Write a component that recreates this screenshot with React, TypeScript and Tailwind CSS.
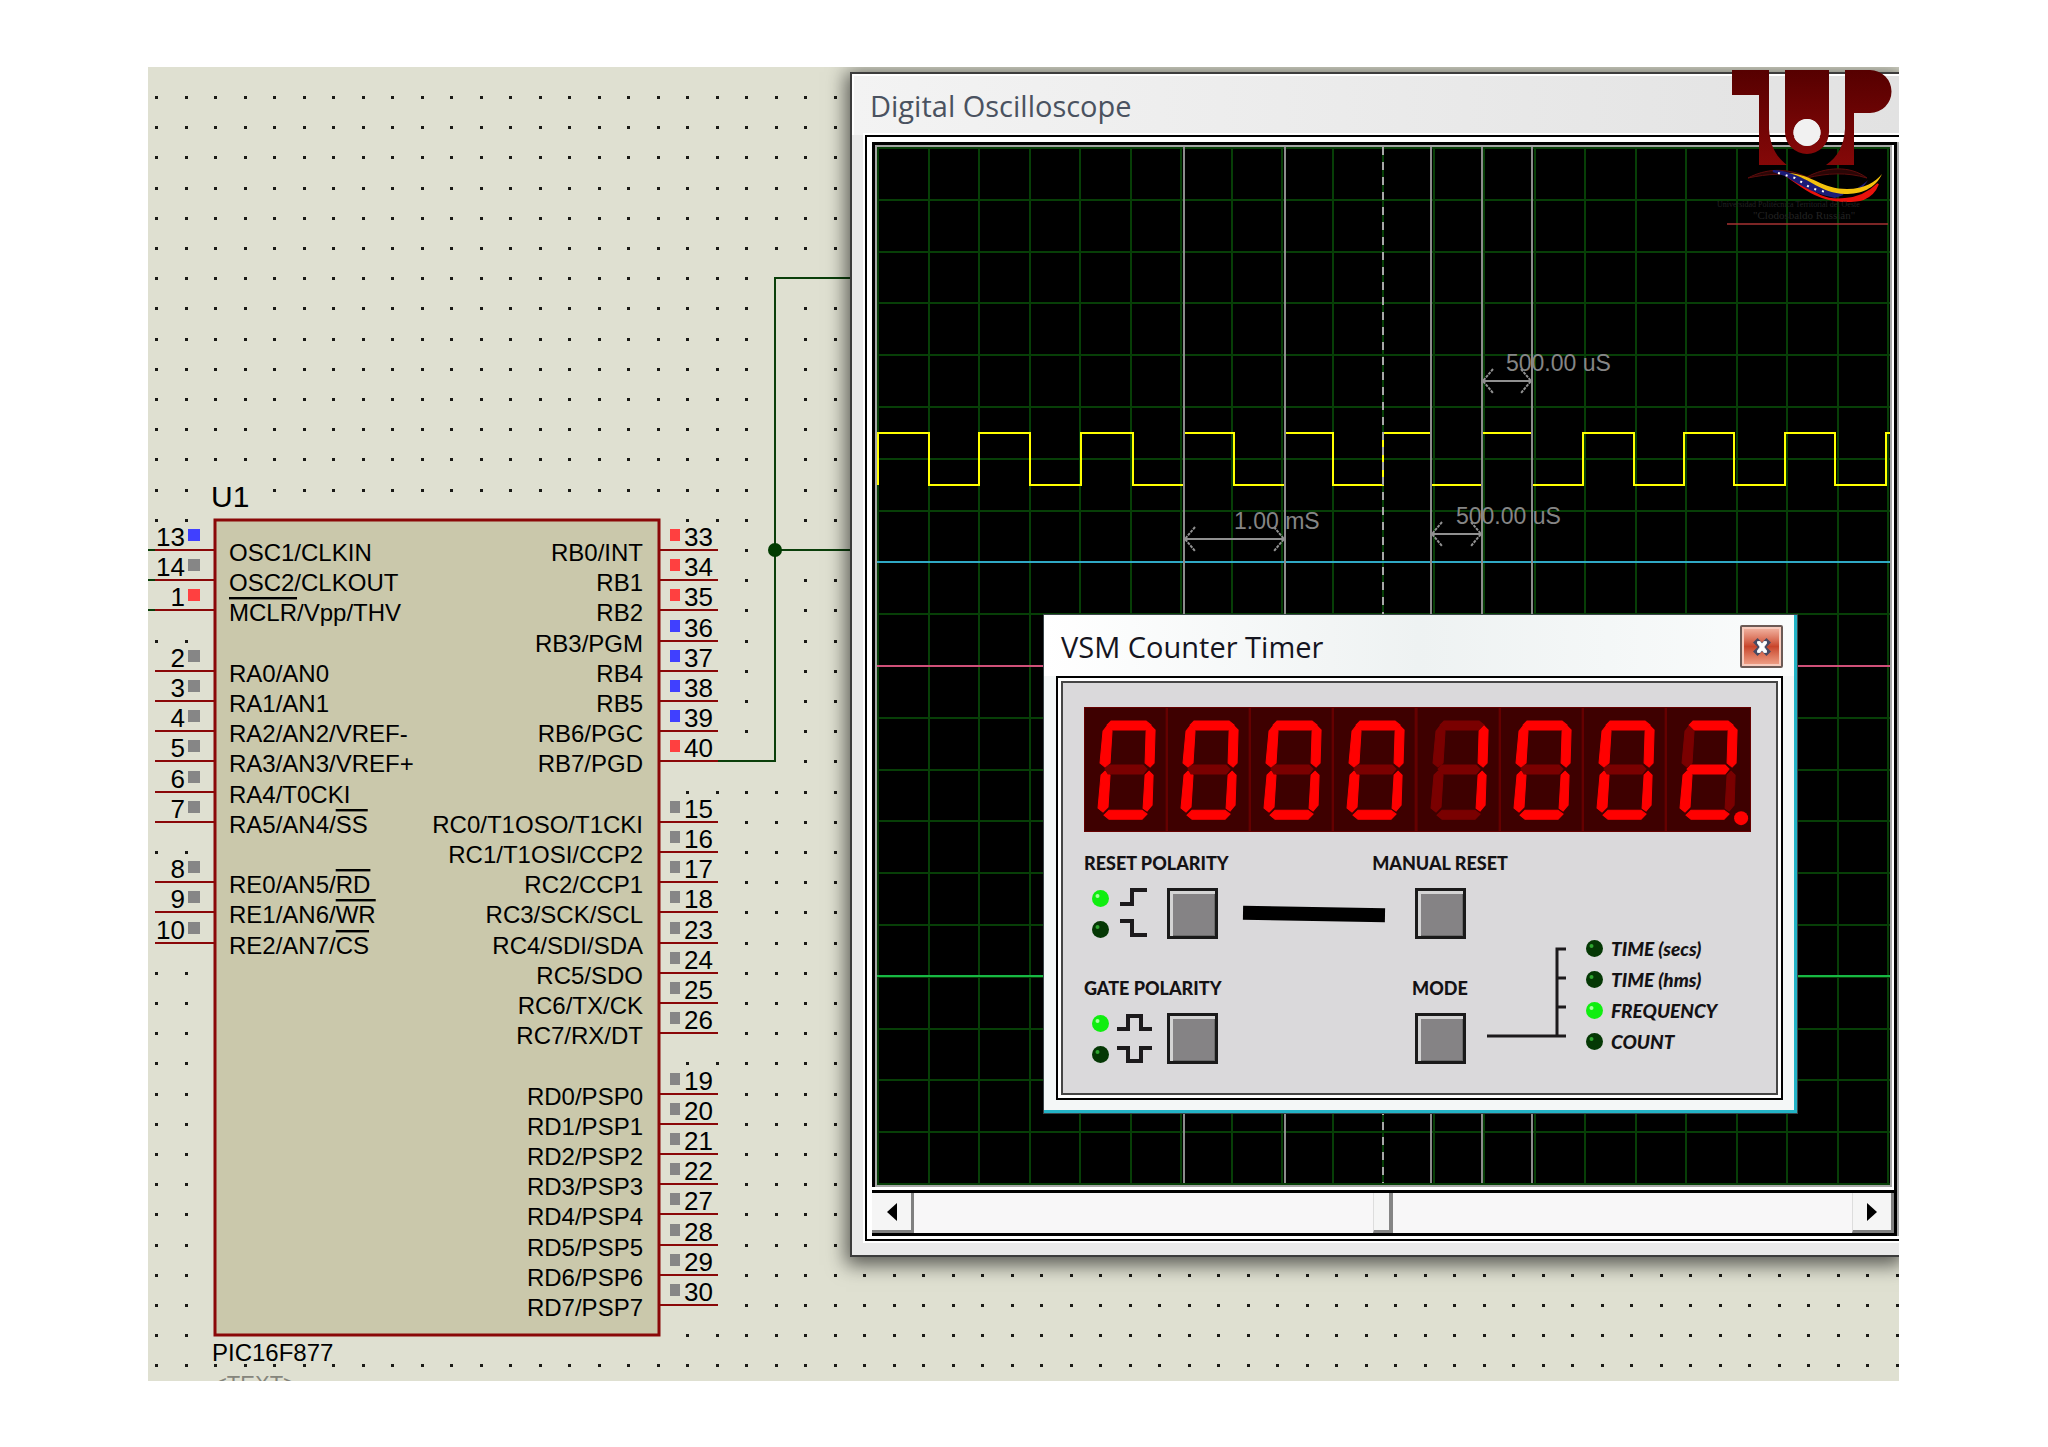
import { Fragment } from "react";

type Level = "high" | "low" | "off";

type Pin = {
  num: string;
  row: number;
  name: string;
  bar?: string;
  rest?: string;
  level?: Level;
};

const leftPins: Pin[] = [
  { num: "13", row: 15, name: "OSC1/CLKIN", level: "low" },
  { num: "14", row: 16, name: "OSC2/CLKOUT" },
  { num: "1", row: 17, name: "", bar: "MCLR", rest: "/Vpp/THV", level: "high" },
  { num: "2", row: 19, name: "RA0/AN0" },
  { num: "3", row: 20, name: "RA1/AN1" },
  { num: "4", row: 21, name: "RA2/AN2/VREF-" },
  { num: "5", row: 22, name: "RA3/AN3/VREF+" },
  { num: "6", row: 23, name: "RA4/T0CKI" },
  { num: "7", row: 24, name: "RA5/AN4/", bar: "SS" },
  { num: "8", row: 26, name: "RE0/AN5/", bar: "RD" },
  { num: "9", row: 27, name: "RE1/AN6/", bar: "WR" },
  { num: "10", row: 28, name: "RE2/AN7/", bar: "CS" },
];

const rightPins: Pin[] = [
  { num: "33", row: 15, name: "RB0/INT", level: "high" },
  { num: "34", row: 16, name: "RB1", level: "high" },
  { num: "35", row: 17, name: "RB2", level: "high" },
  { num: "36", row: 18, name: "RB3/PGM", level: "low" },
  { num: "37", row: 19, name: "RB4", level: "low" },
  { num: "38", row: 20, name: "RB5", level: "low" },
  { num: "39", row: 21, name: "RB6/PGC", level: "low" },
  { num: "40", row: 22, name: "RB7/PGD", level: "high" },
  { num: "15", row: 24, name: "RC0/T1OSO/T1CKI" },
  { num: "16", row: 25, name: "RC1/T1OSI/CCP2" },
  { num: "17", row: 26, name: "RC2/CCP1" },
  { num: "18", row: 27, name: "RC3/SCK/SCL" },
  { num: "23", row: 28, name: "RC4/SDI/SDA" },
  { num: "24", row: 29, name: "RC5/SDO" },
  { num: "25", row: 30, name: "RC6/TX/CK" },
  { num: "26", row: 31, name: "RC7/RX/DT" },
  { num: "19", row: 33, name: "RD0/PSP0" },
  { num: "20", row: 34, name: "RD1/PSP1" },
  { num: "21", row: 35, name: "RD2/PSP2" },
  { num: "22", row: 36, name: "RD3/PSP3" },
  { num: "27", row: 37, name: "RD4/PSP4" },
  { num: "28", row: 38, name: "RD5/PSP5" },
  { num: "29", row: 39, name: "RD6/PSP6" },
  { num: "30", row: 40, name: "RD7/PSP7" },
];

const levelColor: Record<Level, string> = {
  high: "#ff4040",
  low: "#4040ff",
  off: "#868686",
};

const rowY = (row: number) => Math.round(30 + row * 30.2);
const colX = (col: number) => Math.round(8 + col * 29.5);

const leftRows = leftPins.map((p) => p.row);
const rightRows = rightPins.map((p) => p.row);

// grid dots are hidden under the chip, its pins and the wire
function hasDot(col: number, row: number) {
  if (row === 13 && (col === 2 || col === 3)) return false;
  if (row >= 14 && row <= 41 && col >= 2 && col <= 17) return false;
  if (col < 2 && leftRows.includes(row)) return false;
  if ((col === 18 || col === 19) && rightRows.includes(row)) return false;
  if (col === 21 && row >= 6 && row <= 22) return false;
  if (row === 22 && col === 20) return false;
  if (col > 21 && (row === 6 || row === 15) && col < 24) return false;
  return true;
}

function Schematic() {
  const dots = [];
  for (let row = 0; row < 43; row++) {
    for (let col = 0; col < 60; col++) {
      if (hasDot(col, row)) {
        dots.push(`M${colX(col) - 1} ${rowY(row) - 1}h3v3h-3z`);
      }
    }
  }

  return (
    <svg
      width="1751"
      height="1314"
      className="block font-['Liberation_Sans',sans-serif] text-[24px]"
    >
      <path d={dots.join("")} fill="#1a1a16" />

      <g fill="none" stroke="#0a3f0a" strokeWidth="2">
        <path d={`M570 ${rowY(22)}H627V${rowY(6)}H704`} />
        <path d={`M627 ${rowY(15)}H704`} />
        <path d={`M0 ${rowY(15)}H8M0 ${rowY(16)}H8M0 ${rowY(17)}H8`} />
      </g>
      <circle cx="627" cy={rowY(15)} r="7" fill="#003c00" />

      <rect
        x="67"
        y={rowY(14)}
        width="444"
        height={rowY(41) - rowY(14)}
        fill="#cac8ab"
        stroke="#8a0808"
        strokeWidth="3"
      />

      <text x="63" y="440" fontSize="30">
        U1
      </text>
      <text x="64" y="1294">
        PIC16F877
      </text>
      <text x="66" y="1324" fontSize="22" fill="#85857c">
        {"<TEXT>"}
      </text>

      {leftPins.map((pin) => {
        const y = rowY(pin.row);
        return (
          <Fragment key={pin.num}>
            <path d={`M7 ${y}H67`} stroke="#8a0808" strokeWidth="2" />
            <rect
              x="40"
              y={y - 21}
              width="12"
              height="12"
              fill={levelColor[pin.level ?? "off"]}
            />
            <text x="37" y={y - 4} fontSize="26" textAnchor="end">
              {pin.num}
            </text>
            <text x="81" y={y + 11}>
              {pin.name}
              {pin.bar && (
                <tspan className="overline decoration-2">{pin.bar}</tspan>
              )}
              {pin.rest}
            </text>
          </Fragment>
        );
      })}

      {rightPins.map((pin) => {
        const y = rowY(pin.row);
        return (
          <Fragment key={pin.num}>
            <path d={`M511 ${y}H570`} stroke="#8a0808" strokeWidth="2" />
            <rect
              x="522"
              y={y - 21}
              width="10"
              height="12"
              fill={levelColor[pin.level ?? "off"]}
            />
            <text x="536" y={y - 4} fontSize="26">
              {pin.num}
            </text>
            <text x="495" y={y + 11} textAnchor="end">
              {pin.name}
            </text>
          </Fragment>
        );
      })}
    </svg>
  );
}

type MeasureProps = {
  from: number;
  to: number;
  y: number;
  textX: number;
  textY: number;
  label: string;
};

function Measure({ from, to, y, textX, textY, label }: MeasureProps) {
  return (
    <g>
      <path d={`M${from} ${y}H${to}`} stroke="#909090" strokeWidth="2" />
      <path
        d={`M${from + 11} ${y - 12}L${from + 1} ${y}L${from + 11} ${y + 12}M${
          to - 11
        } ${y - 12}L${to - 1} ${y}L${to - 11} ${y + 12}`}
        fill="none"
        stroke="#909090"
        strokeWidth="2"
        strokeDasharray="3 1"
      />
      <text x={textX} y={textY} fill="#858585">
        {label}
      </text>
    </g>
  );
}

const edges = [
  1, 52, 102, 153, 204, 256, 307, 357, 408, 456, 506, 554, 605, 655, 706, 757,
  807, 857, 908, 958, 1009,
];
const cursors = [307, 408, 554, 605, 655];

function ScopePlot() {
  let wave = "M1 338";
  edges.forEach((x, i) => {
    wave += `H${x}V${i % 2 === 0 ? 286 : 338}`;
  });
  wave += "H1013";

  let grid = "";
  for (let i = 0; i <= 20; i++) {
    grid += `M${Math.round(1 + i * 50.5)} 0V1038`;
    grid += `M0 ${Math.round(1 + i * 51.8)}H1013`;
  }

  return (
    <svg
      viewBox="0 0 1013 1038"
      className="block h-auto w-full bg-black font-['Liberation_Sans',sans-serif] text-[23px]"
    >
      <path d={grid} stroke="#073f07" strokeWidth="2" />
      <path d="M0 415H1013" stroke="#2fa8c4" strokeWidth="2" />
      <path d="M0 519H1013" stroke="#cf5078" strokeWidth="2" />
      <path d="M0 829H1013" stroke="#17b845" strokeWidth="2" />
      <path d={wave} fill="none" stroke="#ffff00" strokeWidth="2" />
      {cursors.map((x) => (
        <path key={x} d={`M${x} 0V1036`} stroke="#8c8c8c" strokeWidth="2" />
      ))}
      <path
        d="M506 0V1036"
        stroke="#a8a8a8"
        strokeWidth="2"
        strokeDasharray="8 7"
      />
      <Measure from={605} to={655} y={234} textX={629} textY={224} label="500.00 uS" />
      <Measure from={554} to={605} y={387} textX={579} textY={377} label="500.00 uS" />
      <Measure from={307} to={408} y={392} textX={357} textY={382} label="1.00 mS" />
    </svg>
  );
}

function Oscilloscope() {
  return (
    <section className="absolute top-[5px] right-0 left-[702px] flex flex-col border-y-2 border-l-2 border-[#3c3c3c] bg-[#eaeaea] shadow-[0_4px_18px_4px_rgba(0,0,0,0.6)]">
      <header className="flex h-[61px] items-center border-t-2 border-l-2 border-white bg-linear-to-r from-[#f3f3f3] to-[#e2e2e2] pl-4">
        <h2 className="font-['Open_Sans',sans-serif] text-[29px] leading-10 text-[#4a5260]">
          Digital Oscilloscope
        </h2>
      </header>

      <div className="mb-[14px] ml-[13px] border-y-2 border-l-2 border-black bg-white pt-[5px] pb-[3px] pl-[5px] outline-2 outline-white">
        <div className="border-r-2 border-[#a8a8a8]">
          <div className="border-r-[3px] border-black">
            <div className="border-t-[3px] border-l-[3px] border-black">
              <div className="mr-[2px] border-2 border-[#a6a6a6]">
                <ScopePlot />
              </div>
            </div>
            <div className="mt-[3px] flex h-[46px] border-y-[3px] border-black bg-[#f8f7f8]">
              <button
                aria-label="Scroll left"
                className="flex w-[42px] items-center justify-center border-r-3 border-b-3 border-[#808080] bg-[#f5f5f5]"
              >
                <svg width="10" height="18">
                  <path d="M10 0V18L0 9Z" />
                </svg>
              </button>
              <input
                type="range"
                aria-label="Time position"
                defaultValue={50}
                className="min-w-0 flex-1 appearance-none bg-transparent [&::-webkit-slider-thumb]:h-10 [&::-webkit-slider-thumb]:w-5 [&::-webkit-slider-thumb]:appearance-none [&::-webkit-slider-thumb]:border-r-4 [&::-webkit-slider-thumb]:border-b-3 [&::-webkit-slider-thumb]:border-l-1 [&::-webkit-slider-thumb]:border-[#858585] [&::-webkit-slider-thumb]:border-l-[#dddddd] [&::-webkit-slider-thumb]:bg-[#f5f5f5]"
              />
              <button
                aria-label="Scroll right"
                className="flex w-[42px] items-center justify-center border-r-3 border-b-3 border-l-1 border-[#808080] border-l-[#dddddd] bg-[#f5f5f5]"
              >
                <svg width="10" height="18">
                  <path d="M0 0V18L10 9Z" />
                </svg>
              </button>
            </div>
          </div>
        </div>
      </div>
    </section>
  );
}

const segmentShapes: Record<string, string> = {
  a: "22,17 26,13 61,13 66,17 62,22 26,22",
  b: "61,23 66,18 70,22 69,55 65,59 60,55",
  c: "60,67 64,63 68,67 67,97 62,103 58,100",
  d: "19,107 24,102 57,102 62,106 57,111 24,111",
  e: "16,67 20,63 25,67 23,99 18,104 13,100",
  f: "18,23 22,18 27,23 25,55 20,59 15,55",
  g: "20,61 24,57 58,57 62,61 58,66 23,66",
};

const litSegments: Record<string, string> = {
  "0": "abcdef",
  "1": "bc",
  "2": "abged",
};

function SevenSegment({ value, dot }: { value: string; dot?: boolean }) {
  return (
    <svg viewBox="0 0 83 123" className="block h-auto min-w-0 flex-1">
      {!dot && <path d="M82 0V123" stroke="#650000" strokeWidth="3" />}
      {Object.entries(segmentShapes).map(([name, points]) => (
        <polygon
          key={name}
          points={points}
          fill={litSegments[value].includes(name) ? "#ff0000" : "#7a0000"}
          stroke={litSegments[value].includes(name) ? "#ff0000" : "#7a0000"}
          strokeWidth="1"
        />
      ))}
      {dot && <circle cx="74" cy="110" r="7" fill="#ff0000" />}
    </svg>
  );
}

function Led({ on }: { on?: boolean }) {
  return (
    <svg width="17" height="17" viewBox="0 0 17 17" className="shrink-0">
      <circle cx="8.5" cy="8.5" r="8.5" fill={on ? "#10ee10" : "#053805"} />
      <circle cx="5.5" cy="6" r="2" fill={on ? "#a8ffa0" : "#2fa52f"} />
    </svg>
  );
}

function PushButton({ label }: { label: string }) {
  return (
    <button
      aria-label={label}
      className="size-[51px] shrink-0 border-3 border-[#1a1a1a] bg-[#858385] shadow-[inset_3px_3px_0_#d4d4d4,inset_-1px_-1px_0_#6a6a6a]"
    />
  );
}

type PolarityProps = {
  label: string;
  up: string;
  down: string;
};

function Polarity({ label, up, down }: PolarityProps) {
  return (
    <div>
      <p className="whitespace-nowrap">{label}</p>
      <div className="mt-[15px] flex items-center pl-2">
        <div className="flex flex-col gap-[14px]">
          <Led on />
          <Led />
        </div>
        <svg
          width="36"
          height="51"
          fill="none"
          stroke="#1c1a1c"
          strokeWidth="4"
          className="mr-[14px] ml-2"
        >
          <path d={up} />
          <path d={down} />
        </svg>
        <PushButton label={label} />
      </div>
    </div>
  );
}

const modes = ["TIME (secs)", "TIME (hms)", "FREQUENCY", "COUNT"];

function CounterTimer() {
  return (
    <section className="absolute top-[547px] left-[895px] w-[755px] border border-[#3a4448] bg-[#f4f7f7]">
      <div className="border-r-3 border-b-3 border-[#23b3c6] pb-[10px]">
        <header className="flex h-[61px] items-center justify-between bg-linear-to-r from-white via-[#eef2f2] to-[#fafcfc] pt-[2px] pr-[11px] pl-[17px]">
          <h2 className="font-['Open_Sans',sans-serif] text-[29px] leading-10 text-[#15151f]">
            VSM Counter Timer
          </h2>
          <button
            aria-label="Close"
            className="flex size-[43px] items-center justify-center rounded-xs border-2 border-[#6b5a55] bg-linear-to-b from-[#f3b9a8] from-0% via-[#c8452b] via-50% to-[#f0a58c] shadow-[inset_0_0_0_2px_#f7cbbd]"
          >
            <svg width="18" height="18" viewBox="0 0 20 18">
              <path
                d="M5 4L15 14M15 4L5 14"
                stroke="#474a63"
                strokeWidth="7"
                strokeLinecap="square"
              />
              <path
                d="M5 3H8L10 6L12 3H15V5L12 9L15 13V15H12L10 12L8 15H5V13L8 9L5 5Z"
                fill="#fff"
                stroke="#fff"
                strokeWidth="1"
              />
            </svg>
          </button>
        </header>

        <div className="mr-[11px] ml-3 border-2 border-black bg-white p-[3px]">
          <div className="border-2 border-[#454545] bg-[#dad9db] px-[21px] pt-6 pb-[29px]">
            <div
              role="img"
              aria-label="00001002."
              className="mr-[4px] flex border border-[#650000] bg-[#3e0000]"
            >
              {"00001002".split("").map((digit, i) => (
                <SevenSegment key={i} value={digit} dot={i === 7} />
              ))}
            </div>

            <div className="mt-[21px] flex items-start font-[Lato,sans-serif] text-[18px] leading-5 font-black text-[#141214]">
              <div className="flex w-[159px] flex-col gap-[39px]">
                <Polarity
                  label="RESET POLARITY"
                  up="M3 16H15V2H30"
                  down="M3 33H15V47H30"
                />
                <Polarity
                  label="GATE POLARITY"
                  up="M0 16H11V3H24V16H35"
                  down="M0 35H11V48H24V35H35"
                />
              </div>

              <div className="mt-[54px] -mr-[10px] h-[14px] w-[142px] rotate-1 bg-black" />

              <div className="flex w-[130px] flex-col gap-[39px]">
                {["MANUAL RESET", "MODE"].map((label) => (
                  <div key={label} className="flex flex-col items-center gap-[15px]">
                    <p className="whitespace-nowrap">{label}</p>
                    <PushButton label={label} />
                  </div>
                ))}
              </div>

              <div className="mt-20 -ml-[18px] flex gap-[19px]">
                <svg
                  width="80"
                  height="124"
                  fill="none"
                  stroke="#1c1a1c"
                  strokeWidth="3"
                >
                  <path d="M0 103H79M70 103V16H79M70 45H79M70 74H79" />
                </svg>
                <ul className="text-[19px] leading-[31px] italic">
                  {modes.map((mode) => (
                    <li key={mode} className="flex items-center gap-2">
                      <Led on={mode === "FREQUENCY"} />
                      <span className="whitespace-nowrap">{mode}</span>
                    </li>
                  ))}
                </ul>
              </div>
            </div>
          </div>
        </div>
      </div>
    </section>
  );
}

function Logo() {
  return (
    <svg
      width="184"
      height="164"
      className="absolute top-0 right-0 font-['Liberation_Serif',serif]"
    >
      <defs>
        <linearGradient id="maroon" x1="0" y1="0" x2="0" y2="1">
          <stop offset="0" stopColor="#560000" />
          <stop offset="1" stopColor="#850808" />
        </linearGradient>
      </defs>
      <g fill="url(#maroon)">
        <path d="M17 3H54L54 62C55 78 61 90 72 98H44V28H17Z" />
        <path
          fillRule="evenodd"
          d="M70 3H114V65A22 22 0 0 1 70 65ZM92 52A13.5 13.5 0 1 0 92 79A13.5 13.5 0 1 0 92 52Z"
        />
        <path d="M130 3H155A21.5 21.5 0 0 1 155 46H139V98H111C123 90 129 78 130 62Z" />
      </g>
      <circle cx="92" cy="65.5" r="13.5" fill="#f1f1f1" />
      <path
        d="M33 111C50 102 70 100 92 110C110 100 135 98 152 111C132 105 112 106 92 111C72 105 52 107 33 111Z"
        fill="#2a0606"
        stroke="#5c0c0c"
        strokeWidth="1"
      />
      <path
        d="M66 105C88 112 98 136 130 132C145 131 156 124 163 117C156 135 140 134 128 134C100 133 86 118 66 105Z"
        fill="#e8120c"
        stroke="#e8120c"
        strokeWidth="2"
      />
      <path
        d="M58 104C84 104 100 124 128 127L120 130C98 126 84 116 70 108Z"
        fill="#1c1c78"
        stroke="#1c1c78"
        strokeWidth="2"
      />
      <path
        d="M137 124C145 120 150 116 153 113C149 120 144 124 137 126Z"
        fill="#1c1c78"
      />
      <path
        d="M74 106C98 108 107 122 132 122C150 122 160 115 167 107C160 122 146 127 130 127C106 126 96 112 74 106Z"
        fill="#f4c20d"
      />
      <path
        d="M63 106L80 111L96 121L114 126"
        fill="none"
        stroke="#fff"
        strokeWidth="2"
        strokeDasharray="2 6"
      />
      <text x="2" y="140" fontSize="8" fill="#232323">
        Universidad Politécnica Territorial del Oeste
      </text>
      <text x="38" y="152" fontSize="11" fill="#232323">
        "Clodosbaldo Russián"
      </text>
      <path d="M12 157H173" stroke="#a63232" strokeWidth="1.5" />
    </svg>
  );
}

export default function App() {
  return (
    <main className="flex min-h-screen bg-white px-[148px] pt-[67px] pb-[66px]">
      <div className="relative mr-[1px] min-w-0 flex-1 overflow-hidden bg-[#dfe0d1]">
        <Schematic />
        <Oscilloscope />
        <CounterTimer />
        <Logo />
      </div>
    </main>
  );
}
